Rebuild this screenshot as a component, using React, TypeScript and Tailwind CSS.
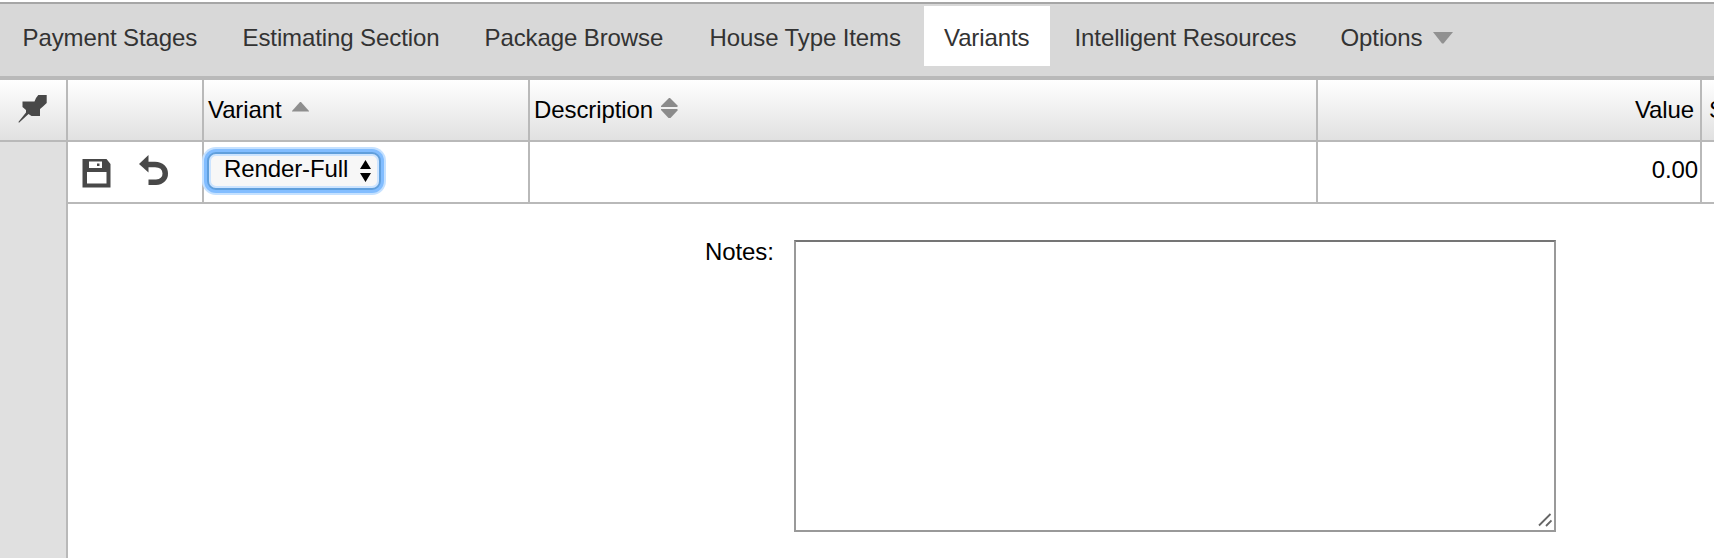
const tabs = [
  { label: "Payment Stages", box: "w-[220px]" },
  { label: "Estimating Section", box: "w-[242px]" },
  { label: "Package Browse", box: "w-[225px]" },
  { label: "House Type Items", box: "w-[214.5px]" },
];

function PinIcon() {
  return (
    <svg width="32" height="32" viewBox="0 0 32 32" fill="#484848">
      <path d="M20.300 1H28.700V9L25 12.500L22 15V22H13.500L10.500 20L1 28.800L0.400 28L8 18.500V16L4.500 13V7.500H16.500L18 4Z" />
    </svg>
  );
}

export default function App() {
  return (
    <div className="flex h-[558px] w-[1714px] flex-col overflow-hidden bg-white pt-[2px] font-['Liberation_Sans',Arial,sans-serif] text-[24px] leading-[28px] tracking-[-0.1px] text-black">
      <nav className="flex h-[78px] shrink-0 border-t-2 border-b-4 border-t-[#a6a6a6] border-b-[#b9b9b9] bg-[#d8d8d8] pt-[2px] pl-[22.5px] leading-[64px] whitespace-nowrap text-[#333]">
        {tabs.map((t) => (
          <a key={t.label} className={t.box + " h-[60px]"}>{t.label}</a>
        ))}
        <a className="h-[60px] w-[126px] bg-white pl-[20px]">Variants</a>
        <a className="h-[60px] w-[290.5px] pl-[24.5px]">Intelligent Resources</a>
        <a className="flex h-[60px]">
          Options
          <svg className="mt-[26px] ml-[10px]" width="20" height="12" viewBox="0 0 20 12"><path d="M0 0H20L10.500 11.500H9Z" fill="#919191" /></svg>
        </a>
      </nav>
      <div className="grid grow grid-cols-[68px_1fr]">
        <aside className="flex flex-col border-r-2 border-[#b9b9b9] bg-[#e0e0e0]">
          <div className="h-[62px] border-b-2 border-[#b9b9b9] bg-linear-to-b from-white to-[#e1e1e1] pt-[14px] pl-[18px]"><PinIcon /></div>
        </aside>
        <main>
          <div className="grid h-[62px] grid-cols-[136px_326px_788px_384px_12px] border-b-2 border-[#b9b9b9] bg-linear-to-b from-white to-[#e1e1e1] leading-[59px]">
            <div className="border-r-2 border-[#b9b9b9]" />
            <div className="flex border-r-2 border-[#b9b9b9] pl-[4px]">
              Variant
              <svg className="mt-[22px] ml-[10px]" width="17" height="10" viewBox="0 0 17 10"><path d="M8 0H9L17 9V9.500H0V9Z" fill="#8e8e8e" /></svg>
            </div>
            <div className="flex border-r-2 border-[#b9b9b9] pl-[4px]">
              Description
              <svg className="mt-[18px] ml-[8px]" width="18" height="20" viewBox="0 0 18 20" fill="#8b8b8b"><path d="M8 0H9L16.500 7.500V9H0V8Z" /><path d="M0 11H16.500V12.500L9.500 20H7.500L0 12Z" /></svg>
            </div>
            <div className="border-r-2 border-[#b9b9b9] pr-[6px] text-right">Value</div>
            <div className="overflow-hidden pl-[7px]">S</div>
          </div>
          <div className="grid h-[62px] grid-cols-[136px_326px_788px_384px_12px] border-b-2 border-[#b9b9b9] bg-white leading-[55px]">
            <div className="flex border-r-2 border-[#b9b9b9]">
              <svg className="mt-[17px] ml-[14px]" width="29" height="29" viewBox="0 0 29 29" fill="#484848"><path fillRule="evenodd" d="M0.500 0H24.500L28.500 5V28.500H0.500ZM7 2.500V9H20V2.500ZM5 13V24.500H24.500V13Z" /><rect x="15" y="4.500" width="2.500" height="2.500" /></svg>
              <svg className="mt-[13px] ml-[28px]" width="31" height="32" viewBox="0 0 31 32"><path d="M8 9.500H16C29.500 9.500 29.500 27.200 17 27.200H9.500" fill="none" stroke="#484848" strokeWidth="5.500" /><path d="M9.500 0V17.500L0 9Z" fill="#484848" /></svg>
            </div>
            <div className="border-r-2 border-[#b9b9b9] pt-[10px] pl-[3px]">
              <button className="relative flex h-[38px] w-[174px] items-center rounded-[9px] border-2 border-[#609fdc] bg-[#f7f7f7] pl-[15px] leading-[32px] shadow-[inset_0_0_0_2px_#cce4ff,0_0_0_3px_#82bdff,0_0_0_5px_#c5e1ff]">
                <span className="-mt-[4px] whitespace-nowrap">Render-Full</span>
                <svg className="ml-[12px]" width="11" height="22" viewBox="0 0 11 22"><path d="M5.500 0L11 9H0ZM0 13H11L5.500 22Z" /></svg>
              </button>
            </div>
            <div className="border-r-2 border-[#b9b9b9]" />
            <div className="border-r-2 border-[#b9b9b9] pr-[2px] text-right">0.00</div>
            <div />
          </div>
          <div className="flex pt-[34px]">
            <label className="w-[726px] shrink-0 pl-[637px]">Notes:</label>
            <div className="mt-[2px] flex h-[292px] w-[762px] items-end justify-end border-2 border-[#999] border-t-[#757575] pr-[2px] pb-[3px]">
              <svg width="14" height="14" viewBox="0 0 14 14"><path d="M1 12.500L12.500 1M8 13L13.500 7.500" stroke="#666" strokeWidth="1.800" /></svg>
            </div>
          </div>
        </main>
      </div>
    </div>
  );
}
